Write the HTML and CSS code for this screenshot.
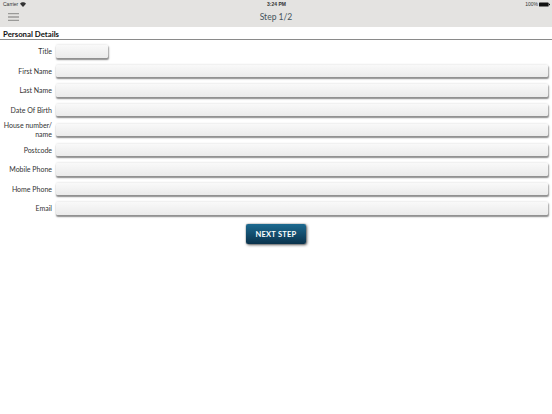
FILE: index.html
```html
<!DOCTYPE html>
<html lang="en">
<head>
<meta charset="utf-8">
<title>Step 1/2</title>
<link rel="stylesheet" href="styles.css">
</head>
<body>
<header class="topbar">
  <div class="status">
    <span class="carrier">Carrier
      <svg class="wifi" viewBox="0 0 10 8" width="6" height="5"><path d="M5 8 0 2.6C2.800-.6 7.200-.6 10 2.600Z"/></svg>
    </span>
    <span class="clock">3:24 PM</span>
    <span class="battery">100%
      <svg viewBox="0 0 16 6" width="11" height="5"><rect width="14" height="6" rx="1"/><rect x="14.500" y="2" width="1.500" height="2"/></svg>
    </span>
  </div>
  <div class="nav">
    <svg class="menu" viewBox="0 0 11 8" width="11" height="8"><path d="M0 .7h11M0 4h11M0 7.300h11"/></svg>
    <h1>Step 1/2</h1>
  </div>
</header>
<main>
  <h2>Personal Details</h2>
  <form class="form">
    <label class="row"><span>Title</span><i class="field short"></i></label>
    <label class="row"><span>First Name</span><i class="field"></i></label>
    <label class="row"><span>Last Name</span><i class="field"></i></label>
    <label class="row"><span>Date Of Birth</span><i class="field"></i></label>
    <label class="row tall"><span>House number/ name</span><i class="field"></i></label>
    <label class="row"><span>Postcode</span><i class="field"></i></label>
    <label class="row"><span>Mobile Phone</span><i class="field"></i></label>
    <label class="row"><span>Home Phone</span><i class="field"></i></label>
    <label class="row"><span>Email</span><i class="field"></i></label>
    <button type="button" class="next">NEXT STEP</button>
  </form>
</main>
</body>
</html>
```
FILE: styles.css
```css
* { box-sizing: border-box; }
html, body { margin: 0; height: 100%; background: #fff; }
body { font-family: "Lato", "Open Sans", sans-serif; color: #222; overflow: hidden; }

.topbar { height: 27px; background: #e4e3e1; }
.status {
  height: 9px;
  display: grid;
  grid-template-columns: 1fr auto 1fr;
  align-items: center;
  padding: 0 2px 0 3px;
  font: 5px/9px "Liberation Sans", sans-serif;
  color: #333;
}
.carrier { display: flex; align-items: center; gap: 2px; }
.wifi { fill: #333; }
.clock { font-weight: 700; }
.battery { display: flex; justify-content: flex-end; align-items: center; gap: 1px; }
.battery svg { fill: #111; }
.nav { position: relative; height: 18px; display: flex; align-items: center; justify-content: center; }
.menu { position: absolute; left: 8px; top: 4px; width: 11px; height: 8px; stroke: #9a9a98; stroke-width: 1.300; fill: none; }
h1 { margin: 0 0 2px; font-size: 8.500px; font-weight: 400; color: #45535c; }

h2 {
  margin: 0;
  padding: 3px 0 0 3px;
  height: 13px;
  font-size: 7.800px;
  line-height: 9px;
  font-weight: 700;
  color: #111;
  border-bottom: 1px solid #8a8a8a;
}
.form { display: flex; flex-direction: column; padding-top: 5px; }
.row { display: flex; align-items: center; height: 12.500px; margin-bottom: 7px; gap: 3.500px; }
.row.tall { height: 13px; margin-top: .3px; margin-bottom: 7.400px; }
.row span {
  flex: 0 0 52px;
  position: relative;
  text-align: right;
  font-size: 7px;
  line-height: 8.500px;
  color: #333;
}
.field {
  display: block;
  width: 492.500px;
  height: 12.500px;
  border-radius: 2px;
  background: linear-gradient(#f9f9f9, #ebebeb);
  box-shadow: 0 -1px 2px #eee, .5px 1.500px 1.500px #8a8a8a;
}
.field.short { width: 52.500px; }
.next {
  align-self: flex-start;
  margin: 2.500px 0 0 246px;
  width: 60px;
  height: 20px;
  padding: 0;
  border: 0;
  border-radius: 2px;
  background: linear-gradient(#1d6a90, #0a324c);
  box-shadow: 0 0 1px #333, 1px 1px 3px #555;
  color: #fff;
  font: 700 7.500px "Lato", sans-serif;
  letter-spacing: .25px;
}
```
